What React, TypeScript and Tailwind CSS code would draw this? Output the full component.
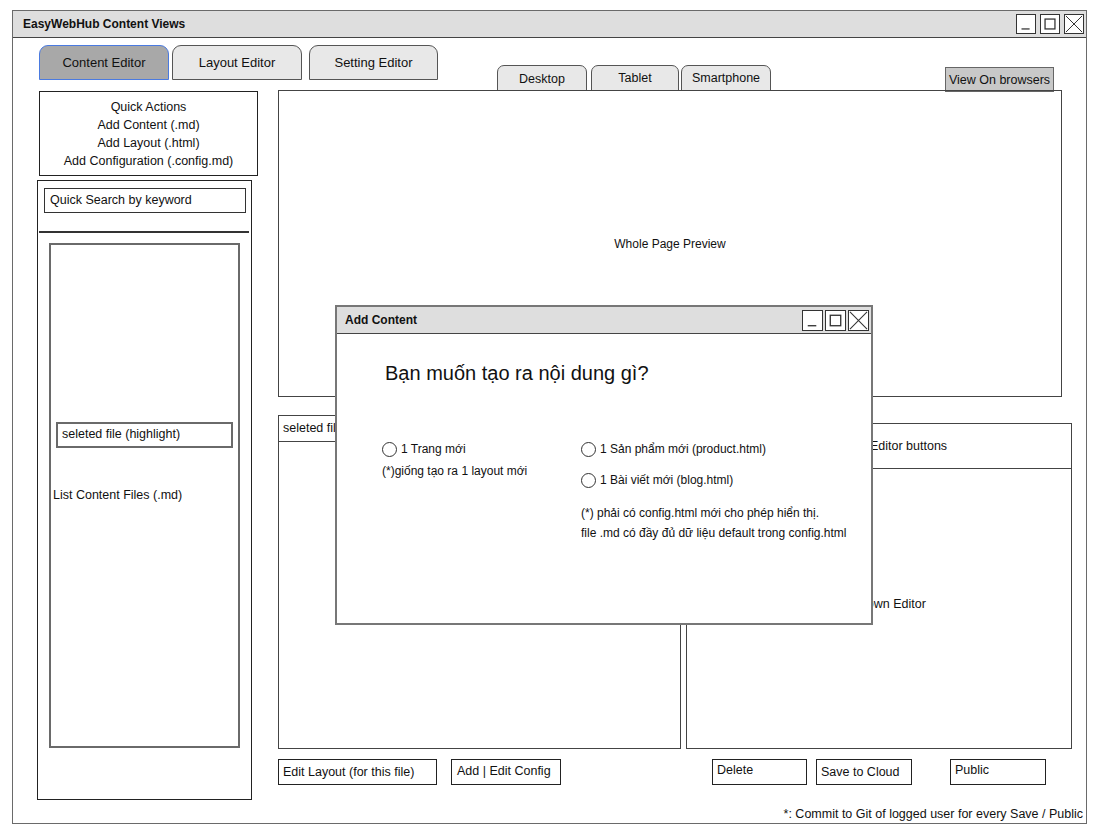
import React from "react";

type Kind = "min" | "max" | "close";

function Ctl({ kind, cls }: { kind: Kind; cls: string }) {
  return (
    <div className={cls}>
      <svg viewBox="0 0 20 20" className="w-full h-full block" preserveAspectRatio="none">
        {kind === "min" && <line x1="5" y1="15.5" x2="14" y2="15.5" stroke="#333" strokeWidth="1.4" />}
        {kind === "max" && <rect x="4.5" y="4.5" width="11" height="11" fill="none" stroke="#333" strokeWidth="1.4" />}
        {kind === "close" && <path d="M1 1L19 19M19 1L1 19" stroke="#333" strokeWidth="1.1" fill="none" />}
      </svg>
    </div>
  );
}

function Radio({ label }: { label: string }) {
  return (
    <div className="flex items-center h-[16px]">
      <div className="w-[15px] h-[15px] rounded-full border-[1.5px] border-[#333] bg-white shrink-0" />
      <span className="ml-[4px] whitespace-nowrap">{label}</span>
    </div>
  );
}

export default function App() {
  const boxMain = "w-[20px] h-[20px] border-[1.5px] border-[#333] bg-white";
  const boxDlg = "w-[21px] h-[21px] border-[1.5px] border-[#333] bg-white";
  return (
    <div className="w-[1110px] h-[838px] bg-white pt-[10px] pl-[12px] font-['Liberation_Sans',Arial,sans-serif] text-[12.5px] text-[#111] leading-none overflow-hidden">
      <div className="relative w-[1075px] h-[814px] border-[1.5px] border-[#6a6a6a] flex flex-col">
        {/* title bar */}
        <div className="h-[27px] shrink-0 bg-[#dedede] border-b-[1.5px] border-[#444] flex items-center justify-between pl-[10px] pr-[2px]">
          <span className="font-bold text-[12px]">EasyWebHub Content Views</span>
          <div className="flex gap-[4px]">
            <Ctl kind="min" cls={boxMain} />
            <Ctl kind="max" cls={boxMain} />
            <Ctl kind="close" cls={boxMain} />
          </div>
        </div>

        {/* body */}
        <div className="flex flex-col pl-[24px] pt-[7px]">
          {/* top row: main tabs + device tabs */}
          <div className="flex h-[46px] items-start">
            <div className="flex ml-[2px]">
              <div className="w-[130px] h-[35px] rounded-t-[9px] border-[1.5px] border-[#4a7ae0] bg-[#a8a8a8] flex items-center justify-center text-[13px]">
                Content Editor
              </div>
              <div className="ml-[3px] w-[130px] h-[35px] rounded-t-[9px] border-[1.5px] border-[#555] bg-[#e8e8e8] flex items-center justify-center text-[13px]">
                Layout Editor
              </div>
              <div className="ml-[7px] w-[129px] h-[35px] rounded-t-[9px] border-[1.5px] border-[#555] bg-[#e8e8e8] flex items-center justify-center text-[13px]">
                Setting Editor
              </div>
            </div>
            <div className="flex ml-[59px] mt-[20px] items-start">
              <div className="w-[90px] h-[26px] rounded-t-[7px] border-[1.5px] border-[#555] bg-[#e8e8e8] flex items-center justify-center pt-[2px]">
                Desktop
              </div>
              <div className="ml-[4px] w-[88px] h-[26px] rounded-t-[7px] border-[1.5px] border-[#555] bg-[#e8e8e8] flex items-center justify-center pt-[1px]">
                Tablet
              </div>
              <div className="ml-[2px] w-[90px] h-[26px] rounded-t-[7px] border-[1.5px] border-[#555] bg-[#e8e8e8] flex items-center justify-center">
                Smartphone
              </div>
            </div>
            <div className="ml-[174px] mt-[22px] w-[109px] h-[25px] border-[1.5px] border-[#666] bg-[#c8c8c8] flex items-center justify-center pt-[2px]">
              View On browsers
            </div>
          </div>

          {/* main area */}
          <div className="flex items-start">
            {/* left column */}
            <div className="w-[221px] flex flex-col shrink-0">
              <div className="ml-[2px] w-[219px] h-[85px] border-[1.5px] border-[#222] flex flex-col items-center justify-center leading-[18px]">
                <span>Quick Actions</span>
                <span>Add Content (.md)</span>
                <span>Add Layout (.html)</span>
                <span>Add Configuration (.config.md)</span>
              </div>
              <div className="mt-[4px] w-[215px] h-[620px] border-[1.5px] border-[#222] flex flex-col">
                <div className="ml-[6px] mt-[7px] w-[202px] h-[25px] border-[1.5px] border-[#333] pl-[5px] flex items-center">
                  Quick Search by keyword
                </div>
                <div className="ml-[1px] mt-[18px] w-[210px] h-[1.5px] bg-[#333]" />
                <div className="ml-[11px] mt-[10px] w-[191px] h-[505px] border-2 border-[#6a6a6a] flex flex-col">
                  <div className="ml-[5px] mt-[177px] w-[177px] h-[26px] border-2 border-[#6a6a6a] pl-[4px] flex items-center">
                    seleted file (highlight)
                  </div>
                  <div className="ml-[2px] mt-[40px] leading-[14px]">List Content Files (.md)</div>
                </div>
              </div>
            </div>

            {/* right area */}
            <div className="ml-[20px] w-[794px] flex flex-col">
              <div className="-mt-[1px] w-[784px] h-[307px] border-[1.5px] border-[#444] flex items-center justify-center text-[12px]">
                Whole Page Preview
              </div>
              <div className="mt-[18px] flex items-start">
                <div className="w-[403px] h-[334px] border-[1.5px] border-[#444] flex flex-col">
                  <div className="h-[26px] border-b-[1.5px] border-[#444] pl-[4px] flex items-center">
                    seleted file name
                  </div>
                </div>
                <div className="ml-[5px] mt-[8px] w-[386px] h-[326px] border-[1.5px] border-[#444] flex flex-col">
                  <div className="h-[45px] border-b-[1.5px] border-[#444] flex items-center justify-center pr-[2px]">
                    Markdown Editor buttons
                  </div>
                  <div className="flex-1 flex items-center justify-center pb-[8px]">Markdown Editor</div>
                </div>
              </div>
              <div className="mt-[10px] flex">
                <div className="w-[159px] h-[26px] border-[1.5px] border-[#222] pl-[4px] flex items-center">
                  Edit Layout (for this file)
                </div>
                <div className="ml-[14px] w-[110px] h-[26px] border-[1.5px] border-[#222] pl-[5px] flex items-center pb-[2px]">
                  Add | Edit Config
                </div>
                <div className="ml-[151px] w-[95px] h-[26px] border-[1.5px] border-[#222] pl-[4px] flex items-center pb-[3px]">
                  Delete
                </div>
                <div className="ml-[9px] w-[96px] h-[26px] border-[1.5px] border-[#222] pl-[4px] flex items-center">
                  Save to Cloud
                </div>
                <div className="ml-[38px] w-[96px] h-[26px] border-[1.5px] border-[#222] pl-[4px] flex items-center pb-[3px]">
                  Public
                </div>
              </div>
            </div>
          </div>

          {/* footer */}
          <div className="mt-[8px] flex justify-end pr-[3px]">
            <span>*: Commit to Git of logged user for every Save / Public</span>
          </div>
        </div>

        {/* dialog */}
        <div className="absolute left-[322px] top-[294px] w-[538px] h-[320px] border-2 border-[#777] bg-white flex flex-col">
          <div className="h-[27px] shrink-0 bg-[#dedede] border-b-[1.5px] border-[#444] flex items-center justify-between pl-[8px] pr-[2px]">
            <span className="font-bold text-[12px]">Add Content</span>
            <div className="flex gap-[2px]">
              <Ctl kind="min" cls={boxDlg} />
              <Ctl kind="max" cls={boxDlg} />
              <Ctl kind="close" cls={boxDlg} />
            </div>
          </div>
          <div className="flex flex-col pl-[45px] pt-[27px] text-[12px]">
            <div className="ml-[3px] text-[20px] leading-[24px]">Bạn muốn tạo ra nội dung gì?</div>
            <div className="mt-[56px] flex items-start">
              <div className="w-[199px] flex flex-col">
                <Radio label="1 Trang mới" />
                <div className="mt-[6px] leading-[16px]">(*)giống tạo ra 1 layout mới</div>
              </div>
              <div className="flex flex-col">
                <Radio label="1 Sản phẩm mới (product.html)" />
                <div className="mt-[15px]">
                  <Radio label="1 Bài viết mới (blog.html)" />
                </div>
                <div className="mt-[15px] leading-[20px] whitespace-nowrap">
                  <div>(*) phải có config.html mới cho phép hiển thị.</div>
                  <div>file .md có đầy đủ dữ liệu default trong config.html</div>
                </div>
              </div>
            </div>
          </div>
        </div>
      </div>
    </div>
  );
}
